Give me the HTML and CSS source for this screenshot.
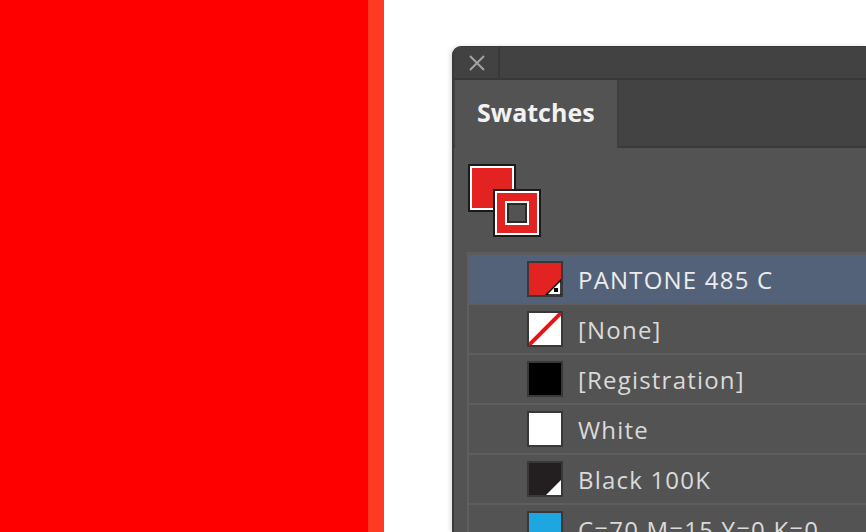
FILE: index.html
```html
<!DOCTYPE html>
<html>
<head>
<meta charset="utf-8">
<link rel="stylesheet" href="styles.css">
</head>
<body>
<div class="stage">
  <div class="red"></div>
  <div class="band"></div>
  <div class="gap"></div>
  <div class="panel">
    <div class="titlebar">
      <div class="close">
        <svg width="18" height="18" viewBox="0 0 18 18"><path d="M2 2 L16 16 M16 2 L2 16" stroke="#a3a3a3" stroke-width="2" fill="none"/></svg>
      </div>
    </div>
    <div class="tabrow">
      <div class="tab">Swatches</div>
    </div>
    <div class="content">
      <div class="fillstroke">
        <div class="fill"></div>
        <div class="stroke"><div class="hole"></div></div>
      </div>
      <div class="list">
        <div class="row selected">
          <div class="sw sw-red">
            <svg class="corner" width="16" height="16" viewBox="0 0 16 16"><path d="M16 1 L16 16 L1 16 Z" fill="#fff" stroke="#000" stroke-width="1.5"/><rect x="9" y="9" width="4" height="4" fill="#000"/></svg>
          </div>
          <span class="label">PANTONE 485 C</span>
        </div>
        <div class="row">
          <div class="sw sw-white">
            <svg class="full" width="32" height="32" viewBox="0 0 32 32"><path d="M0 32 L32 0" stroke="#ee1111" stroke-width="4"/></svg>
          </div>
          <span class="label">[None]</span>
        </div>
        <div class="row">
          <div class="sw sw-black"></div>
          <span class="label">[Registration]</span>
        </div>
        <div class="row">
          <div class="sw sw-white"></div>
          <span class="label">White</span>
        </div>
        <div class="row">
          <div class="sw sw-dark">
            <svg class="corner" width="16" height="16" viewBox="0 0 16 16"><path d="M16 1 L16 16 L1 16 Z" fill="#fff"/></svg>
          </div>
          <span class="label">Black 100K</span>
        </div>
        <div class="row">
          <div class="sw sw-cyan"></div>
          <span class="label">C=70 M=15 Y=0 K=0</span>
        </div>
      </div>
    </div>
  </div>
</div>
</body>
</html>
```
FILE: styles.css
```css
html, body {
  margin: 0;
  padding: 0;
  background: #ffffff;
}
.stage {
  width: 866px;
  height: 532px;
  display: flex;
  overflow: hidden;
  font-family: "Open Sans", "Noto Sans", sans-serif;
}
.red {
  width: 368px;
  flex: none;
  background: #ff0000;
}
.band {
  width: 16px;
  flex: none;
  background: #ff3a22;
}
.gap {
  width: 68px;
  flex: none;
  background: #ffffff;
}
.panel {
  flex: 1;
  margin-top: 46px;
  background: #535353;
  border-top-left-radius: 9px;
  border-left: 2px solid #3a3a3a;
  border-top: 1px solid #3a3a3a;
  box-shadow: -2px 0 4px rgba(0,0,0,0.12);
  display: flex;
  flex-direction: column;
  overflow: hidden;
}
.titlebar {
  flex: none;
  height: 31px;
  background: #424242;
  display: flex;
  border-bottom: 2px solid #383838;
}
.close {
  width: 42px;
  border-right: 2px solid #383838;
  display: flex;
  align-items: center;
  justify-content: center;
  padding-left: 2px;
}
.tabrow {
  flex: none;
  height: 66px;
  background: #434343;
  display: flex;
  border-bottom: 2px solid #3a3a3a;
  padding-left: 1px;
}
.tab {
  width: 140px;
  background: #535353;
  color: #f2f2f2;
  font-weight: 700;
  font-size: 25px;
  padding-left: 22px;
  padding-bottom: 4px;
  display: flex;
  align-items: center;
  margin-bottom: -2px;
  border-right: 2px solid #3e3e3e;
}
.content {
  flex: none;
  padding: 16px 0 0 13px;
}
.fillstroke {
  position: relative;
  width: 74px;
  height: 74px;
}
.fill {
  position: absolute;
  left: 1px;
  top: 0;
  width: 40px;
  height: 40px;
  background: #e32222;
  border: 2px solid #ffffff;
  outline: 2px solid #1a1a1a;
  margin: 2px;
}
.stroke {
  position: absolute;
  left: 28px;
  top: 27px;
  width: 24px;
  height: 24px;
  border: 8px solid #e32222;
  box-shadow: 0 0 0 2px #ffffff, 0 0 0 4px #1a1a1a, inset 0 0 0 2px #ffffff, inset 0 0 0 4px #2a2a2a;
  margin: 2px;
  display: flex;
  align-items: center;
  justify-content: center;
}
.hole {
  width: 16px;
  height: 16px;
  background: #535353;
}
.list {
  margin-top: 14px;
  border-left: 2px solid #5e5e5e;
  border-top: 3px solid #5c5c5c;
}
.row {
  height: 48px;
  border-bottom: 2px solid #5e5e5e;
  display: flex;
  align-items: center;
  padding-left: 58px;
  color: #dadada;
  font-size: 24px;
}
.row.selected {
  background: #546279;
  color: #ececec;
}
.sw {
  position: relative;
  width: 32px;
  height: 32px;
  border: 2px solid #383838;
  flex: none;
  margin-right: 15px;
  overflow: hidden;
}
.sw-red { background: #e32222; }
.sw-white { background: #ffffff; }
.sw-black { background: #000000; }
.sw-dark { background: #231f20; }
.sw-cyan { background: #1ea6e0; }
.corner {
  position: absolute;
  right: 0;
  bottom: 0;
}
.full {
  position: absolute;
  left: 0;
  top: 0;
}
.label {
  white-space: nowrap;
  letter-spacing: 1.2px;
}
```
